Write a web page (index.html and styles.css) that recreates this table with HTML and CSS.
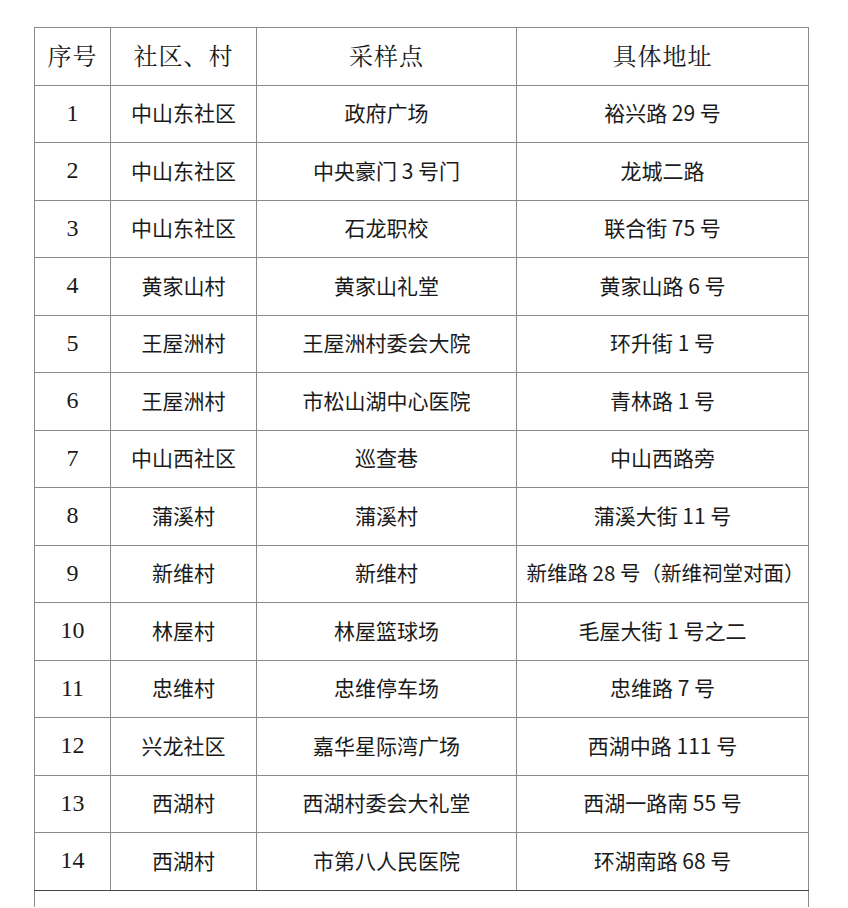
FILE: index.html
```
<!DOCTYPE html>
<html lang="zh-CN">
<head>
<meta charset="utf-8">
<link rel="stylesheet" href="styles.css">
</head>
<body>
<table class="sites">
  <colgroup>
    <col class="c-no"><col class="c-area"><col class="c-point"><col class="c-addr">
  </colgroup>
  <thead>
    <tr><th>序号</th><th>社区、村</th><th>采样点</th><th>具体地址</th></tr>
  </thead>
  <tbody>
    <tr><td class="num">1</td><td>中山东社区</td><td>政府广场</td><td>裕兴路 29 号</td></tr>
    <tr><td class="num">2</td><td>中山东社区</td><td>中央豪门 3 号门</td><td>龙城二路</td></tr>
    <tr><td class="num">3</td><td>中山东社区</td><td>石龙职校</td><td>联合街 75 号</td></tr>
    <tr><td class="num">4</td><td>黄家山村</td><td>黄家山礼堂</td><td>黄家山路 6 号</td></tr>
    <tr><td class="num">5</td><td>王屋洲村</td><td>王屋洲村委会大院</td><td>环升街 1 号</td></tr>
    <tr><td class="num">6</td><td>王屋洲村</td><td>市松山湖中心医院</td><td>青林路 1 号</td></tr>
    <tr><td class="num">7</td><td>中山西社区</td><td>巡查巷</td><td>中山西路旁</td></tr>
    <tr><td class="num">8</td><td>蒲溪村</td><td>蒲溪村</td><td>蒲溪大街 11 号</td></tr>
    <tr><td class="num">9</td><td>新维村</td><td>新维村</td><td class="long">新维路 28 号（新维祠堂对面）</td></tr>
    <tr><td class="num">10</td><td>林屋村</td><td>林屋篮球场</td><td>毛屋大街 1 号之二</td></tr>
    <tr><td class="num">11</td><td>忠维村</td><td>忠维停车场</td><td>忠维路 7 号</td></tr>
    <tr><td class="num">12</td><td>兴龙社区</td><td>嘉华星际湾广场</td><td>西湖中路 111 号</td></tr>
    <tr><td class="num">13</td><td>西湖村</td><td>西湖村委会大礼堂</td><td>西湖一路南 55 号</td></tr>
    <tr class="last"><td class="num">14</td><td>西湖村</td><td>市第八人民医院</td><td>环湖南路 68 号</td></tr>
    <tr class="tail"><td colspan="4"></td></tr>
  </tbody>
</table>
</body>
</html>
```
FILE: styles.css
```
html, body {
  margin: 0;
  padding: 0;
  background: #ffffff;
}
body {
  padding: 27px 0 0 34px;
  overflow: hidden;
  height: 908px;
  box-sizing: border-box;
}
.sites {
  border-collapse: collapse;
  table-layout: fixed;
  width: 774px;
  color: #1a1a1a;
  font-family: "Noto Sans CJK SC", "Noto Sans", sans-serif;
  font-size: 21px;
}
.c-no { width: 76px; }
.c-area { width: 146px; }
.c-point { width: 260px; }
.c-addr { width: 292px; }
.sites th,
.sites td {
  border: 1px solid #8a8a8a;
  text-align: center;
  vertical-align: middle;
  padding: 0 0 3px 0;
  height: 53.5px;
  white-space: nowrap;
}
.sites th {
  font-family: "Noto Serif CJK SC", "Liberation Serif", "Noto Sans CJK SC", serif;
  font-weight: normal;
  font-size: 24px;
  letter-spacing: 1px;
}
.sites td.num {
  font-family: "Liberation Serif", serif;
  font-size: 24px;
  padding-bottom: 1px;
  height: 55.5px;
}
.sites td.long {
  font-size: 20.5px;
  padding-left: 6px;
}
.sites tr.last td {
  border-bottom-color: #444;
}
.sites tr.tail td {
  height: 16px;
  padding: 0;
  border-bottom: none;
}
```
